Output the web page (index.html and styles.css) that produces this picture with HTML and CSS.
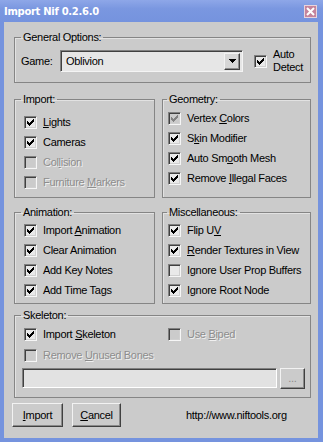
FILE: index.html
```html
<!DOCTYPE html>
<html>
<head>
<meta charset="utf-8">
<title>Import Nif</title>
<link rel="stylesheet" href="styles.css">
</head>
<body>
<div class="window">
  <div class="titlebar">
    <span class="title">Import Nif 0.2.6.0</span>
    <span class="close"><svg width="9" height="9" viewBox="0 0 9 9"><path d="M1 1L8 8M8 1L1 8" stroke="#fff" stroke-width="2"/></svg></span>
  </div>
  <div class="frame">
    <div class="client">
      <fieldset class="group">
        <legend>General Options:</legend>
        <div class="gen-body">
          <span class="game-lbl">Game:</span>
          <div class="combo">
            <span class="combo-text">Oblivion</span>
            <span class="combo-btn"><svg width="7" height="4" viewBox="0 0 7 4"><path d="M0 0h7v1H0zM1 1h5v1H1zM2 2h3v1H2zM3 3h1v1H3z" fill="#000"/></svg></span>
          </div>
          <div class="check auto">
            <span class="box"><svg class="tick" viewBox="0 0 7 7"><path d="M6 0h1v1H6zM5 1h2v1H5zM0 2h1v1H0zM4 2h3v1H4zM0 3h2v1H0zM3 3h3v1H3zM0 4h5v1H0zM1 5h3v1H1zM2 6h1v1H2z"/></svg></span>
            <span class="auto-lbl">Auto<br>Detect</span>
          </div>
        </div>
      </fieldset>

      <div class="pair pair-top">
        <fieldset class="group left">
          <legend>Import:</legend>
          <div class="rows import-rows">
            <div class="check"><span class="box"><svg class="tick" viewBox="0 0 7 7"><path d="M6 0h1v1H6zM5 1h2v1H5zM0 2h1v1H0zM4 2h3v1H4zM0 3h2v1H0zM3 3h3v1H3zM0 4h5v1H0zM1 5h3v1H1zM2 6h1v1H2z"/></svg></span><span><u>L</u>ights</span></div>
            <div class="check"><span class="box"><svg class="tick" viewBox="0 0 7 7"><path d="M6 0h1v1H6zM5 1h2v1H5zM0 2h1v1H0zM4 2h3v1H4zM0 3h2v1H0zM3 3h3v1H3zM0 4h5v1H0zM1 5h3v1H1zM2 6h1v1H2z"/></svg></span><span>Cameras</span></div>
            <div class="check dis"><span class="box"></span><span>Col<u>l</u>ision</span></div>
            <div class="check dis"><span class="box"></span><span>Furniture <u>M</u>arkers</span></div>
          </div>
        </fieldset>
        <fieldset class="group right">
          <legend>Geometry:</legend>
          <div class="rows geo-rows">
            <div class="check dis"><span class="box"><svg class="tick" viewBox="0 0 7 7"><path d="M6 0h1v1H6zM5 1h2v1H5zM0 2h1v1H0zM4 2h3v1H4zM0 3h2v1H0zM3 3h3v1H3zM0 4h5v1H0zM1 5h3v1H1zM2 6h1v1H2z"/></svg></span><span class="dark">Vertex <u>C</u>olors</span></div>
            <div class="check"><span class="box"><svg class="tick" viewBox="0 0 7 7"><path d="M6 0h1v1H6zM5 1h2v1H5zM0 2h1v1H0zM4 2h3v1H4zM0 3h2v1H0zM3 3h3v1H3zM0 4h5v1H0zM1 5h3v1H1zM2 6h1v1H2z"/></svg></span><span>S<u>k</u>in Modifier</span></div>
            <div class="check"><span class="box"><svg class="tick" viewBox="0 0 7 7"><path d="M6 0h1v1H6zM5 1h2v1H5zM0 2h1v1H0zM4 2h3v1H4zM0 3h2v1H0zM3 3h3v1H3zM0 4h5v1H0zM1 5h3v1H1zM2 6h1v1H2z"/></svg></span><span>Auto Sm<u>o</u>oth Mesh</span></div>
            <div class="check"><span class="box"><svg class="tick" viewBox="0 0 7 7"><path d="M6 0h1v1H6zM5 1h2v1H5zM0 2h1v1H0zM4 2h3v1H4zM0 3h2v1H0zM3 3h3v1H3zM0 4h5v1H0zM1 5h3v1H1zM2 6h1v1H2z"/></svg></span><span>Remove <u>I</u>llegal Faces</span></div>
          </div>
        </fieldset>
      </div>

      <div class="pair pair-mid">
        <fieldset class="group left">
          <legend>Animation:</legend>
          <div class="rows anim-rows">
            <div class="check"><span class="box"><svg class="tick" viewBox="0 0 7 7"><path d="M6 0h1v1H6zM5 1h2v1H5zM0 2h1v1H0zM4 2h3v1H4zM0 3h2v1H0zM3 3h3v1H3zM0 4h5v1H0zM1 5h3v1H1zM2 6h1v1H2z"/></svg></span><span>Import <u>A</u>nimation</span></div>
            <div class="check"><span class="box"><svg class="tick" viewBox="0 0 7 7"><path d="M6 0h1v1H6zM5 1h2v1H5zM0 2h1v1H0zM4 2h3v1H4zM0 3h2v1H0zM3 3h3v1H3zM0 4h5v1H0zM1 5h3v1H1zM2 6h1v1H2z"/></svg></span><span>Clear Animation</span></div>
            <div class="check"><span class="box"><svg class="tick" viewBox="0 0 7 7"><path d="M6 0h1v1H6zM5 1h2v1H5zM0 2h1v1H0zM4 2h3v1H4zM0 3h2v1H0zM3 3h3v1H3zM0 4h5v1H0zM1 5h3v1H1zM2 6h1v1H2z"/></svg></span><span>Add Key Notes</span></div>
            <div class="check"><span class="box"><svg class="tick" viewBox="0 0 7 7"><path d="M6 0h1v1H6zM5 1h2v1H5zM0 2h1v1H0zM4 2h3v1H4zM0 3h2v1H0zM3 3h3v1H3zM0 4h5v1H0zM1 5h3v1H1zM2 6h1v1H2z"/></svg></span><span>Add Time Tags</span></div>
          </div>
        </fieldset>
        <fieldset class="group right">
          <legend>Miscellaneous:</legend>
          <div class="rows anim-rows">
            <div class="check"><span class="box"><svg class="tick" viewBox="0 0 7 7"><path d="M6 0h1v1H6zM5 1h2v1H5zM0 2h1v1H0zM4 2h3v1H4zM0 3h2v1H0zM3 3h3v1H3zM0 4h5v1H0zM1 5h3v1H1zM2 6h1v1H2z"/></svg></span><span>Flip U<u>V</u></span></div>
            <div class="check"><span class="box"><svg class="tick" viewBox="0 0 7 7"><path d="M6 0h1v1H6zM5 1h2v1H5zM0 2h1v1H0zM4 2h3v1H4zM0 3h2v1H0zM3 3h3v1H3zM0 4h5v1H0zM1 5h3v1H1zM2 6h1v1H2z"/></svg></span><span><u>R</u>ender Textures in View</span></div>
            <div class="check"><span class="box"></span><span>Ignore User Prop Buffers</span></div>
            <div class="check"><span class="box"><svg class="tick" viewBox="0 0 7 7"><path d="M6 0h1v1H6zM5 1h2v1H5zM0 2h1v1H0zM4 2h3v1H4zM0 3h2v1H0zM3 3h3v1H3zM0 4h5v1H0zM1 5h3v1H1zM2 6h1v1H2z"/></svg></span><span>Ignore Root Node</span></div>
          </div>
        </fieldset>
      </div>

      <fieldset class="group skeleton">
        <legend>Skeleton:</legend>
        <div class="skel-body">
          <div class="skel-row">
            <div class="check skel-first"><span class="box"><svg class="tick" viewBox="0 0 7 7"><path d="M6 0h1v1H6zM5 1h2v1H5zM0 2h1v1H0zM4 2h3v1H4zM0 3h2v1H0zM3 3h3v1H3zM0 4h5v1H0zM1 5h3v1H1zM2 6h1v1H2z"/></svg></span><span>Import <u>S</u>keleton</span></div>
            <div class="check dis"><span class="box"></span><span>Use <u>B</u>iped</span></div>
          </div>
          <div class="skel-row second">
            <div class="check dis"><span class="box"></span><span>Remove <u>U</u>nused Bones</span></div>
          </div>
          <div class="path-row">
            <div class="edit"></div>
            <div class="btn browse">...</div>
          </div>
        </div>
      </fieldset>

      <div class="footer">
        <div class="btn action import-btn"><u>I</u>mport</div>
        <div class="btn action cancel-btn"><u>C</u>ancel</div>
        <span class="url">http://www.niftools.org</span>
      </div>
    </div>
  </div>
</div>
</body>
</html>
```

FILE: styles.css
```css
* { box-sizing: border-box; }
html, body { margin: 0; padding: 0; }
body {
  width: 323px;
  height: 442px;
  overflow: hidden;
  font-family: "Liberation Sans", Arial, sans-serif;
  font-size: 11px;
  letter-spacing: -0.3px;
  color: #000;
  background: #7593de;
}
.window {
  width: 323px;
  height: 442px;
  display: flex;
  flex-direction: column;
  background: #7593de;
}
.titlebar {
  height: 22px;
  flex-shrink: 0;
  display: flex;
  align-items: center;
  justify-content: space-between;
  padding: 0 6px 0 4px;
  background: linear-gradient(#8ea7e8, #7a97e0 40%, #7593de);
}
.title {
  color: #fff;
  font-family: "DejaVu Sans", Verdana, sans-serif;
  font-weight: bold;
  font-size: 10px;
  letter-spacing: -0.3px;
  margin-top: 1px;
}
.close {
  width: 13px;
  height: 13px;
  display: flex;
  align-items: center;
  justify-content: center;
  background: #c5849c;
  border: 1px solid #e8d4dc;
  margin-top: 1px;
}
.frame {
  flex: 1;
  display: flex;
  padding: 0 5px 4px 4px;
}
.client {
  flex: 1;
  background: #cbcbcb;
  display: flex;
  flex-direction: column;
  padding: 9px 7px 0 10px;
}
.group {
  margin: 0;
  padding: 0;
  min-width: 0;
  border: 1px solid #858585;
  box-shadow: inset 1px 1px 0 #e2e2e2;
}
.group legend {
  margin-left: 6px;
  padding: 0 2px;
  height: 13px;
  line-height: 13px;
}
.group.right legend { margin-left: 4px; padding: 0 2px; }

/* general */
.gen-body {
  display: flex;
  align-items: center;
  height: 22px;
  margin: 6px 0 10px 0;
  padding-left: 6px;
}
.game-lbl { width: 39px; flex-shrink: 0; }
.combo {
  width: 183px;
  height: 22px;
  display: flex;
  align-items: center;
  justify-content: space-between;
  background: #e6e6e6;
  border-top: 1px solid #808080;
  border-left: 1px solid #808080;
  border-right: 1px solid #f4f4f4;
  border-bottom: 1px solid #f4f4f4;
  box-shadow: inset 1px 1px 0 #404040;
  padding: 2px 2px 2px 4px;
}
.combo-text { padding-left: 1px; }
.combo-btn {
  width: 16px;
  height: 17px;
  display: flex;
  align-items: center;
  justify-content: center;
  background: #d6d6d6;
  border-top: 1px solid #f2f2f2;
  border-left: 1px solid #f2f2f2;
  border-right: 1px solid #404040;
  border-bottom: 1px solid #404040;
  box-shadow: inset -1px -1px 0 #8c8c8c;
}
.auto { margin-left: 11px; height: auto; }
.auto-lbl { line-height: 13px; }

/* pairs */
.pair {
  display: flex;
  gap: 7px;
}
.pair .left { width: 141px; flex-shrink: 0; }
.pair .right { flex: 1; }
.pair-top { margin-top: 10px; }
.pair-mid { margin-top: 8px; }

.rows { display: flex; flex-direction: column; }
.import-rows { padding: 6px 0 5px 9px; }
.geo-rows { padding: 2px 0 0 5px; }
.anim-rows { padding: 1px 0 3px 9px; }
.right .anim-rows { padding-left: 5px; }

.check {
  display: flex;
  align-items: center;
  gap: 6px;
  height: 20px;
  white-space: nowrap;
}
.box {
  width: 13px;
  height: 13px;
  flex-shrink: 0;
  display: flex;
  align-items: center;
  justify-content: center;
  background: #e9e9e9;
  border-top: 1px solid #808080;
  border-left: 1px solid #808080;
  border-right: 1px solid #f6f6f6;
  border-bottom: 1px solid #f6f6f6;
  box-shadow: inset 1px 1px 0 #404040, inset -1px -1px 0 #d0d0d0;
}
.tick {
  width: 7px;
  height: 7px;
  fill: #000;
  shape-rendering: crispEdges;
}
.check.dis { color: #8d8d8d; text-shadow: 1px 1px 0 #f0f0f0; }
.check.dis .box { background: #cbcbcb; }
.check.dis .tick { fill: #808080; }
.check.dis .dark { color: #000; text-shadow: none; }

/* skeleton */
.skeleton { margin-top: 5px; }
.skel-body { padding: 2px 0 8px 0; }
.skel-row { display: flex; padding-left: 9px; }
.skel-row.second { margin-top: 1px; }
.skel-first { width: 144px; }
.path-row {
  display: flex;
  gap: 3px;
  margin-top: 3px;
  padding-left: 7px;
}
.edit {
  width: 255px;
  height: 20px;
  background: #e2e2e2;
  border-top: 1px solid #808080;
  border-left: 1px solid #808080;
  border-right: 1px solid #ffffff;
  border-bottom: 1px solid #ffffff;
  box-shadow: inset 1px 1px 0 #404040;
}
.btn {
  display: flex;
  align-items: center;
  justify-content: center;
  background: #cbcbcb;
  border-top: 1px solid #f2f2f2;
  border-left: 1px solid #f2f2f2;
  border-right: 1px solid #404040;
  border-bottom: 1px solid #404040;
  box-shadow: inset -1px -1px 0 #8a8a8a;
}
.browse {
  width: 25px;
  height: 21px;
  color: #8a8a8a;
  padding-bottom: 2px;
}

/* footer */
.footer {
  display: flex;
  align-items: center;
  margin: 5px 0 0 -2px;
}
.action { height: 24px; }
.import-btn { width: 51px; }
.cancel-btn { width: 49px; margin-left: 9px; }
.url { margin-left: 65px; }
```
